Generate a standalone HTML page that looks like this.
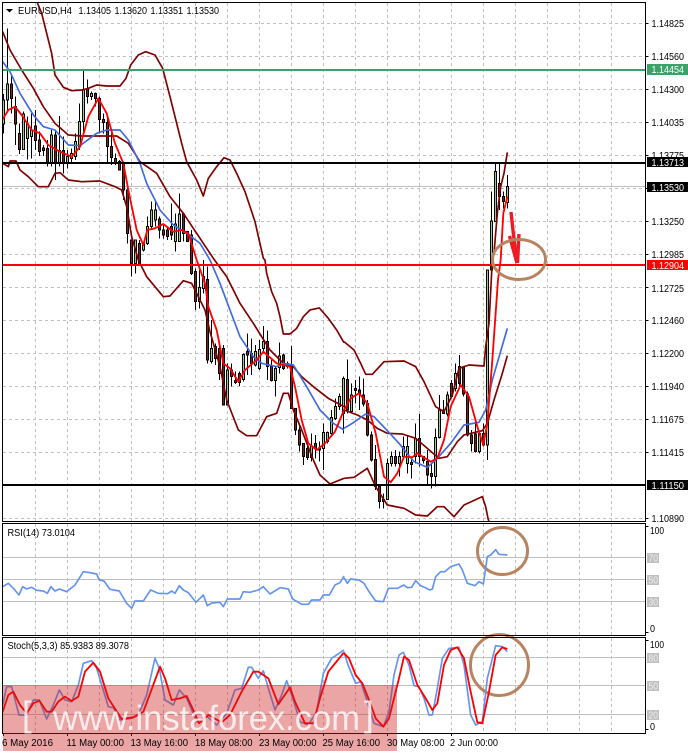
<!DOCTYPE html>
<html><head><meta charset="utf-8"><title>EURUSD H4</title>
<style>
html,body{margin:0;padding:0;background:#fff;width:688px;height:754px;overflow:hidden}
svg{display:block}
text{font-family:"Liberation Sans",sans-serif;font-size:10px;fill:#000}
.w{fill:#fff}
.g{fill:#eee}
.grid{stroke:#c0c0c0;stroke-width:1;stroke-dasharray:3 3;fill:none}
.sl{stroke:#c0c0c0;stroke-width:1;fill:none}
.wick{stroke:#000;stroke-width:3;fill:none}
.up{fill:#a5dc28;stroke:#000;stroke-width:3}
.dn{fill:#8b1a1a;stroke:#000;stroke-width:3}
.bb{stroke:#7f0000;stroke-width:5;fill:none;stroke-linejoin:round}
.ma{stroke:#4169e1;stroke-width:5;fill:none;stroke-linejoin:round}
.rd{stroke:#f00;stroke-width:5.5;fill:none;stroke-linejoin:round}
.cf{stroke:#6495ed;stroke-width:5;fill:none;stroke-linejoin:round}
</style></head><body>
<svg width="688" height="754" viewBox="0 0 688 754" xmlns="http://www.w3.org/2000/svg">
<rect width="688" height="754" fill="#fff"/>

<!-- grid -->
<g shape-rendering="crispEdges">
<path class="grid" d="M35.5 3V521M67.5 3V521M99.5 3V521M131.5 3V521M163.5 3V521M195.5 3V521M227.5 3V521M259.5 3V521M291.5 3V521M323.5 3V521M355.5 3V521M387.5 3V521M419.5 3V521M451.5 3V521M483.5 3V521M515.5 3V521M547.5 3V521M579.5 3V521M611.5 3V521"/>
<path class="grid" d="M3 23.5H645M3 56.5H645M3 89.5H645M3 122.5H645M3 155.5H645M3 188.5H645M3 221.5H645M3 254.5H645M3 287.5H645M3 320.5H645M3 353.5H645M3 386.5H645M3 419.5H645M3 452.5H645M3 518.5H645"/>
<path class="grid" d="M35.5 524V635M67.5 524V635M99.5 524V635M131.5 524V635M163.5 524V635M195.5 524V635M227.5 524V635M259.5 524V635M291.5 524V635M323.5 524V635M355.5 524V635M387.5 524V635M419.5 524V635M451.5 524V635M483.5 524V635M515.5 524V635M547.5 524V635M579.5 524V635M611.5 524V635"/>
<path class="grid" d="M35.5 638V733M67.5 638V733M99.5 638V733M131.5 638V733M163.5 638V733M195.5 638V733M227.5 638V733M259.5 638V733M291.5 638V733M323.5 638V733M355.5 638V733M387.5 638V733M419.5 638V733M451.5 638V733M483.5 638V733M515.5 638V733M547.5 638V733M579.5 638V733M611.5 638V733"/>
<path class="sl" d="M3 186.5H645M3 557.5H645M3 579.5H645M3 601.5H645M3 657.5H645M3 685.5H645M3 714.5H645"/>
</g>

<!-- candles -->
<g shape-rendering="crispEdges">
<g transform="scale(.33333)">
<path class="wick" d="M10.5 282V400M22.5 85V330M34.5 225V340M46.5 290V435M58.5 370V462M70.5 335V450M82.5 350V478M94.5 340V475M106.5 330V450M118.5 395V468M130.5 435V468M142.5 420V500M154.5 390V500M166.5 390V540M178.5 348V500M190.5 410V520M202.5 450V505M214.5 445V490M226.5 400V480M238.5 310V450M250.5 212V395M262.5 238V310M274.5 275V300M286.5 278V320M298.5 290V400M310.5 340V400M322.5 350V490M334.5 400V495M346.5 460V495M358.5 480V510M370.5 485V600M382.5 560V730M394.5 720V830M406.5 720V820M418.5 720V790M430.5 730V755M442.5 650V735M454.5 605V690M466.5 605V680M478.5 650V715M490.5 670V715M502.5 680V720M514.5 610V720M526.5 640V755M538.5 580V725M550.5 640V725M562.5 695V725M574.5 690V825"/>
<path class="up" d="M7.5 300h6V372h-6zM19.5 252h6V300h-6zM67.5 342h6V448h-6zM79.5 372h6V415h-6zM91.5 390h6V410h-6zM151.5 405h6V490h-6zM175.5 451h6V490h-6zM199.5 470h6V490h-6zM211.5 460h6V475h-6zM223.5 425h6V470h-6zM235.5 365h6V440h-6zM247.5 270h6V365h-6zM271.5 280h6V290h-6zM403.5 720h6V790h-6zM427.5 730h6V750h-6zM439.5 680h6V730h-6zM451.5 630h6V680h-6zM463.5 630h6V660h-6zM523.5 672h6V725h-6zM535.5 642h6V725h-6z"/>
<path class="dn" d="M31.5 252h6V295h-6zM43.5 320h6V372h-6zM55.5 400h6V448h-6zM103.5 378h6V422h-6zM115.5 420h6V455h-6zM127.5 444h6V452h-6zM139.5 445h6V490h-6zM163.5 405h6V490h-6zM187.5 452h6V490h-6zM259.5 266h6V290h-6zM283.5 280h6V295h-6zM295.5 295h6V358h-6zM307.5 358h6V368h-6zM319.5 368h6V440h-6zM331.5 440h6V472h-6zM343.5 475h6V488h-6zM355.5 485h6V510h-6zM367.5 490h6V570h-6zM379.5 570h6V700h-6zM391.5 720h6V790h-6zM415.5 730h6V790h-6zM475.5 657h6V690h-6zM487.5 690h6V705h-6zM499.5 690h6V710h-6zM511.5 680h6V705h-6zM547.5 642h6V700h-6zM559.5 695h6V725h-6zM571.5 705h6V820h-6z"/>
</g>
<g transform="translate(0 260) scale(.33333)">
<path class="wick" d="M586.5 25V150M598.5 30V145M610.5 0V100M622.5 20V310M634.5 180V310M646.5 250V315M658.5 255V360M670.5 255V435M682.5 310V435M694.5 310V380M706.5 335V372M718.5 335V378M730.5 280V365M742.5 220V345M754.5 235V345M766.5 255V320M778.5 240V330M790.5 198V280M802.5 212V360M814.5 300V365M826.5 320V410M838.5 248V340M850.5 280V330M862.5 305V325M874.5 258V445M886.5 445V525M898.5 500V575M910.5 550V615M922.5 555V600M934.5 520V605M946.5 525V595M958.5 545V605M970.5 490V630M982.5 515V550M994.5 450V530M1006.5 415V480M1018.5 400V450M1030.5 350V520"/>
<path class="up" d="M595.5 82h6V125h-6zM607.5 50h6V85h-6zM631.5 265h6V305h-6zM679.5 330h6V435h-6zM727.5 283h6V358h-6zM763.5 275h6V315h-6zM775.5 268h6V325h-6zM787.5 245h6V265h-6zM823.5 325h6V362h-6zM835.5 288h6V322h-6zM931.5 558h6V592h-6zM967.5 518h6V565h-6zM979.5 518h6V545h-6zM991.5 472h6V520h-6zM1003.5 440h6V475h-6zM1015.5 410h6V440h-6zM1027.5 355h6V460h-6z"/>
<path class="dn" d="M583.5 35h6V125h-6zM619.5 58h6V300h-6zM643.5 260h6V295h-6zM655.5 265h6V340h-6zM667.5 265h6V435h-6zM691.5 330h6V350h-6zM703.5 362h6V368h-6zM715.5 340h6V368h-6zM739.5 275h6V285h-6zM751.5 280h6V310h-6zM799.5 245h6V320h-6zM811.5 320h6V362h-6zM847.5 285h6V325h-6zM859.5 310h6V320h-6zM871.5 320h6V445h-6zM883.5 445h6V510h-6zM895.5 510h6V555h-6zM907.5 550h6V590h-6zM919.5 565h6V592h-6zM943.5 550h6V565h-6zM955.5 565h6V570h-6z"/>
</g>
<g transform="translate(344 260) scale(.33333)">
<path class="wick" d="M10.5 298V460M22.5 370V460M34.5 360V430M46.5 350V450M58.5 355V440M70.5 420V530M82.5 515V605M94.5 555V690M106.5 680V745M118.5 700V745M130.5 595V720M142.5 575V620M154.5 570V620M166.5 575V650M178.5 530V590M190.5 530V640M202.5 590V655M214.5 490V610M226.5 462V620M238.5 590V610M250.5 570V672M262.5 610V685M274.5 505V680M286.5 405V535M298.5 420V462M310.5 395V470M322.5 360V415M334.5 310V395M346.5 285V385M358.5 320V410M370.5 395V530M382.5 510V575M394.5 480V578M406.5 515V580M418.5 490V560M430.5 30V600"/>
<path class="up" d="M19.5 405h6V455h-6zM127.5 610h6V718h-6zM139.5 590h6V610h-6zM163.5 590h6V610h-6zM175.5 560h6V590h-6zM187.5 560h6V610h-6zM211.5 535h6V590h-6zM271.5 532h6V650h-6zM283.5 450h6V532h-6zM307.5 405h6V462h-6zM331.5 340h6V385h-6zM403.5 520h6V575h-6zM427.5 30h6V555h-6z"/>
<path class="dn" d="M7.5 358h6V450h-6zM31.5 385h6V392h-6zM43.5 390h6V400h-6zM55.5 405h6V432h-6zM67.5 430h6V525h-6zM79.5 525h6V600h-6zM91.5 598h6V680h-6zM103.5 680h6V725h-6zM115.5 718h6V725h-6zM151.5 590h6V610h-6zM199.5 608h6V614h-6zM223.5 535h6V590h-6zM235.5 590h6V602h-6zM247.5 605h6V645h-6zM259.5 640h6V650h-6zM295.5 450h6V460h-6zM319.5 370h6V410h-6zM343.5 320h6V370h-6zM355.5 322h6V402h-6zM367.5 402h6V525h-6zM379.5 525h6V550h-6zM391.5 522h6V575h-6zM415.5 520h6V555h-6z"/>
</g>
<g transform="translate(344 0) scale(.33333)">
<path class="wick" d="M442.5 575V810M454.5 490V665M466.5 490V630M478.5 575V625M490.5 525V625"/>
<path class="up" d="M439.5 663h6V810h-6zM451.5 514h6V665h-6zM487.5 560h6V607h-6z"/>
<path class="dn" d="M463.5 550h6V590h-6zM475.5 590h6V605h-6z"/>
</g>
</g>

<!-- indicator lines main -->
<g transform="scale(.33333)">
<path class="bb" d="M112 8L125 40L140 100L155 160L165 225L190 262L215 272L245 270L265 265L290 255L320 258L360 258L378 235L392 195L415 165L437 155L465 165L488 205L510 290L530 370L545 430L560 485L590 540L610 588L625 535L650 500L672 473L690 480L710 520L735 575L765 665L790 775L795 780L800 820L815 875L830 910L840 950L850 1002L870 1002L890 985L910 950L930 930L958 924L985 955L1010 990L1032 1028"/>
<path class="bb" d="M8 95L30 150L65 210L100 265L130 320L165 370L205 405L245 408L290 408L350 408L385 430L420 485L470 520L510 590L550 640L590 700L640 775L680 830L720 910L760 970L810 1050L850 1090L880 1100L905 1130L940 1160L985 1195L1032 1220"/>
<path class="bb" d="M8 490L25 500L30 483L48 483L60 510L85 530L115 560L145 560L165 520L180 518L205 540L245 545L300 543L345 560L365 570L380 620L395 710L415 780L440 830L465 860L490 890L510 888L550 842L575 850L590 880L615 930L630 995L660 1100L680 1200L715 1290L740 1307L770 1307L800 1250L830 1240L850 1180L865 1180L880 1230L905 1290L940 1380L960 1425L990 1452L1032 1435"/>
<path class="ma" d="M8 185L30 215L60 280L100 345L130 380L165 390L205 435L240 437L290 400L320 390L360 390L385 420L420 490L440 550L480 630L520 675L560 700L600 730L630 780L660 850L690 930L720 1010L760 1070L785 1090L830 1100L850 1090L880 1095L920 1160L960 1230L1000 1270L1032 1290"/>
<path class="rd" d="M8 358L25 330L45 320L65 345L95 390L120 400L145 435L180 455L215 470L240 440L265 350L295 295L320 340L345 430L370 490L385 570L410 690L430 735L442 690L465 685L490 672L520 695L545 690L565 700L590 780L615 850L625 920L650 990L670 1090L690 1105L715 1145L735 1110L770 1080L790 1055L830 1090L870 1100L885 1160L905 1260L925 1330L950 1350L975 1330L1005 1295L1032 1230"/>
</g>
<g transform="translate(344 260) scale(.33333)">
<path class="bb" d="M0 245L30 270L50 310L65 343L85 343L120 305L180 303L215 320L240 365L275 440L300 455L325 405L345 325L375 315L420 318L425 260L435 190L445 0L450 -20L460 -140L470 -220L480 -260L490 -323"/>
<path class="bb" d="M0 450L40 465L70 480L100 505L130 520L175 522L215 535L250 565L285 595L310 590L340 545L360 525L415 512L430 490L450 420L475 340L490 287"/>
<path class="bb" d="M0 655L30 652L70 625L95 680L130 735L180 745L215 765L250 768L280 740L300 740L330 770L360 735L415 710L425 740L433 780L436 782"/>
<path class="ma" d="M0 505L25 490L65 462L90 470L130 512L165 550L210 605L250 622L280 595L320 550L360 495L405 487L425 450L445 360L490 205"/>
<path class="rd" d="M0 450L20 415L45 400L70 430L95 520L120 650L140 667L160 640L180 590L205 592L220 580L260 605L280 595L300 540L320 440L350 375L375 410L400 500L418 555L430 490L445 300L462 60L470 0L478 -140L490 -190"/>
</g>

<!-- horizontal levels -->
<g shape-rendering="crispEdges">
<rect x="3" y="69" width="642" height="2" fill="#3ba26b"/>
<rect x="3" y="162" width="642" height="2" fill="#000"/>
<rect x="3" y="264" width="642" height="2" fill="#f00"/>
<rect x="3" y="484" width="642" height="2" fill="#000"/>
</g>

<!-- hand drawn arrow & circles -->
<path d="M511 212L513.5 235L517 263" stroke="#ed1c24" stroke-width="3.4" fill="none"/>
<path d="M509.5 236L517 263M519 234L517.5 263" stroke="#ed1c24" stroke-width="3.4" fill="none"/>
<g fill="none" stroke="#b8835f" stroke-width="3">
<ellipse cx="519" cy="259.5" rx="26.5" ry="20"/>
<ellipse cx="502.5" cy="551" rx="25" ry="23.5"/>
<ellipse cx="499.5" cy="665" rx="29" ry="30.5"/>
</g>

<!-- RSI / Stoch lines -->
<g transform="translate(0 515) scale(.33333)">
<path class="cf" d="M8 215L25 205L40 220L57 240L68 215L80 222L95 217L110 226L130 228L142 235L153 215L165 228L178 222L200 230L225 210L250 170L270 173L290 177L298 195L312 198L330 223L358 228L380 265L395 280L405 258L430 258L452 225L475 235L503 236L515 228L525 235L538 212L550 225L565 233L588 262L610 240L622 272L635 264L660 262L670 275L682 252L720 252L730 230L750 232L775 225L790 215L810 237L840 218L865 222L878 252L905 268L925 268L935 255L960 255L970 240L988 240L1005 210L1020 203L1032 183"/>
<path class="cf" d="M8 570L20 515L35 515L57 600L80 600L100 555L118 555L140 612L160 570L178 525L195 555L215 560L235 510L250 445L275 437L290 460L325 575L340 578L360 615L395 610L415 600L440 540L465 430L478 460L495 555L520 570L538 525L560 550L590 620L622 605L650 630L680 595L705 525L725 520L745 457L755 457L775 490L790 467L805 520L825 585L845 540L860 497L880 555L900 620L925 630L950 590L970 475L995 430L1032 405"/>
<path class="rd" d="M8 590L25 540L40 530L60 570L80 595L100 565L118 557L140 590L155 590L175 560L195 545L215 558L235 545L255 470L280 443L300 470L325 550L365 612L400 607L430 590L445 550L480 455L495 490L515 555L540 550L560 543L575 575L597 625L625 600L665 622L690 600L725 530L760 470L775 470L805 490L835 568L870 517L885 560L915 625L940 625L960 550L985 470L1032 412"/>
</g>
<g transform="translate(344 515) scale(.33333)">
<path class="cf" d="M0 188L10 205L20 192L45 195L60 205L75 230L95 258L118 260L133 220L160 220L180 210L190 218L203 217L215 197L230 212L258 225L265 222L275 185L290 170L303 170L320 155L345 147L355 165L370 205L393 212L405 200L418 207L430 125L440 120L455 104L465 118L490 120"/>
<path class="cf" d="M0 410L12 450L35 505L50 500L70 560L90 625L118 635L135 590L150 480L165 420L178 412L195 450L210 512L225 515L240 550L255 600L265 600L280 520L295 430L315 400L345 397L360 450L380 600L395 630L415 620L430 490L455 392L475 395L490 410"/>
<path class="rd" d="M0 415L15 430L35 480L55 505L75 555L95 610L118 635L135 610L165 490L180 425L195 435L220 510L245 550L265 585L280 565L300 450L320 405L340 397L360 430L380 530L400 622L415 625L435 530L455 420L475 397L490 402"/>
</g>

<!-- frames -->
<g shape-rendering="crispEdges" fill="none" stroke="#000" stroke-width="1">
<path d="M2.5 2.5H645.5V521.5H2.5Z"/>
<path d="M2.5 523.5H645.5V635.5H2.5Z"/>
<path d="M2.5 637.5H645.5V733.5H2.5Z"/>
<path d="M645.5 23.5h3M645.5 56.5h3M645.5 89.5h3M645.5 122.5h3M645.5 155.5h3M645.5 188.5h3M645.5 221.5h3M645.5 254.5h3M645.5 287.5h3M645.5 320.5h3M645.5 353.5h3M645.5 386.5h3M645.5 419.5h3M645.5 452.5h3M645.5 518.5h3"/>
<path d="M645.5 526.5h3M645.5 632.5h3M645.5 640.5h3M645.5 729.5h3"/>
<path d="M3.5 733v3M67.5 733v3M131.5 733v3M195.5 733v3M259.5 733v3M323.5 733v3M387.5 733v3M451.5 733v3"/>
</g>

<!-- header text -->
<path d="M6 9h7l-3.5 3.5z" fill="#000"/>
<text x="18" y="14" textLength="54" lengthAdjust="spacingAndGlyphs">EURUSD,H4</text>
<text x="78.5" y="14" textLength="32.5" lengthAdjust="spacingAndGlyphs">1.13405</text>
<text x="114.5" y="14" textLength="32.5" lengthAdjust="spacingAndGlyphs">1.13620</text>
<text x="150.5" y="14" textLength="32.5" lengthAdjust="spacingAndGlyphs">1.13351</text>
<text x="186.5" y="14" textLength="32.5" lengthAdjust="spacingAndGlyphs">1.13530</text>

<!-- price axis -->
<g>
<text x="651.5" y="27" textLength="32.5" lengthAdjust="spacingAndGlyphs">1.14825</text>
<text x="651.5" y="60" textLength="32.5" lengthAdjust="spacingAndGlyphs">1.14560</text>
<text x="651.5" y="93" textLength="32.5" lengthAdjust="spacingAndGlyphs">1.14300</text>
<text x="651.5" y="126" textLength="32.5" lengthAdjust="spacingAndGlyphs">1.14035</text>
<text x="651.5" y="159" textLength="32.5" lengthAdjust="spacingAndGlyphs">1.13775</text>
<text x="651.5" y="225" textLength="32.5" lengthAdjust="spacingAndGlyphs">1.13250</text>
<text x="651.5" y="258" textLength="32.5" lengthAdjust="spacingAndGlyphs">1.12985</text>
<text x="651.5" y="292" textLength="32.5" lengthAdjust="spacingAndGlyphs">1.12725</text>
<text x="651.5" y="324" textLength="32.5" lengthAdjust="spacingAndGlyphs">1.12460</text>
<text x="651.5" y="357" textLength="32.5" lengthAdjust="spacingAndGlyphs">1.12200</text>
<text x="651.5" y="390" textLength="32.5" lengthAdjust="spacingAndGlyphs">1.11940</text>
<text x="651.5" y="423" textLength="32.5" lengthAdjust="spacingAndGlyphs">1.11675</text>
<text x="651.5" y="456" textLength="32.5" lengthAdjust="spacingAndGlyphs">1.11415</text>
<text x="651.5" y="522" textLength="32.5" lengthAdjust="spacingAndGlyphs">1.10890</text>
<g shape-rendering="crispEdges">
<rect x="647" y="64" width="41" height="11" fill="#3ba26b"/>
<rect x="647" y="157" width="41" height="10" fill="#000"/>
<rect x="647" y="182" width="41" height="10" fill="#000"/>
<rect x="647" y="260" width="41" height="10" fill="#f00"/>
<rect x="647" y="480" width="41" height="10" fill="#000"/>
</g>
<text class="w" x="651.5" y="73" textLength="32.5" lengthAdjust="spacingAndGlyphs">1.14454</text>
<text class="w" x="651.5" y="166" textLength="32.5" lengthAdjust="spacingAndGlyphs">1.13713</text>
<text class="w" x="651.5" y="191" textLength="32.5" lengthAdjust="spacingAndGlyphs">1.13530</text>
<text class="w" x="651.5" y="269" textLength="32.5" lengthAdjust="spacingAndGlyphs">1.12904</text>
<text class="w" x="651.5" y="489" textLength="32.5" lengthAdjust="spacingAndGlyphs">1.11150</text>
</g>

<!-- indicator labels -->
<text x="7.5" y="536" textLength="67.5" lengthAdjust="spacingAndGlyphs">RSI(14) 73.0104</text>
<text x="7.5" y="649" textLength="121.5" lengthAdjust="spacingAndGlyphs">Stoch(5,3,3) 85.9383 89.3078</text>
<text x="650" y="534" textLength="14" lengthAdjust="spacingAndGlyphs">100</text>
<text x="650" y="632" textLength="5" lengthAdjust="spacingAndGlyphs">0</text>
<text x="650" y="648" textLength="14" lengthAdjust="spacingAndGlyphs">100</text>
<text x="650" y="730" textLength="5" lengthAdjust="spacingAndGlyphs">0</text>
<g shape-rendering="crispEdges" fill="#c0c0c0">
<rect x="647" y="553" width="12" height="10"/>
<rect x="647" y="575" width="12" height="10"/>
<rect x="647" y="597" width="12" height="10"/>
<rect x="647" y="653" width="12" height="10"/>
<rect x="647" y="681" width="12" height="10"/>
<rect x="647" y="710" width="12" height="10"/>
</g>
<text class="g" x="648.5" y="561.5" textLength="9.5" lengthAdjust="spacingAndGlyphs">70</text>
<text class="g" x="648.5" y="583.5" textLength="9.5" lengthAdjust="spacingAndGlyphs">50</text>
<text class="g" x="648.5" y="605.5" textLength="9.5" lengthAdjust="spacingAndGlyphs">30</text>
<text class="g" x="648.5" y="661.5" textLength="9.5" lengthAdjust="spacingAndGlyphs">80</text>
<text class="g" x="648.5" y="689.5" textLength="9.5" lengthAdjust="spacingAndGlyphs">50</text>
<text class="g" x="648.5" y="718.5" textLength="9.5" lengthAdjust="spacingAndGlyphs">20</text>

<!-- watermark -->
<rect x="3" y="685" width="394" height="66" fill="#cf1f1f" fill-opacity=".4"/>
<text x="22" y="726" style="font-size:35px;fill:#fff;fill-opacity:.8">[</text>
<text x="53" y="730" textLength="307" lengthAdjust="spacingAndGlyphs" style="font-size:35px;fill:#fff;fill-opacity:.8">www.instaforex.com</text>
<text x="364" y="726" style="font-size:35px;fill:#fff;fill-opacity:.8">]</text>

<!-- time axis -->
<text x="2" y="746" textLength="51" lengthAdjust="spacingAndGlyphs">6 May 2016</text>
<text x="66.5" y="746" textLength="57.5" lengthAdjust="spacingAndGlyphs">11 May 00:00</text>
<text x="130.5" y="746" textLength="57.5" lengthAdjust="spacingAndGlyphs">13 May 16:00</text>
<text x="195" y="746" textLength="57.5" lengthAdjust="spacingAndGlyphs">18 May 08:00</text>
<text x="259" y="746" textLength="57.5" lengthAdjust="spacingAndGlyphs">23 May 00:00</text>
<text x="322.5" y="746" textLength="57.5" lengthAdjust="spacingAndGlyphs">25 May 16:00</text>
<text x="387" y="746" textLength="57.5" lengthAdjust="spacingAndGlyphs">30 May 08:00</text>
<text x="450" y="746" textLength="48" lengthAdjust="spacingAndGlyphs">2 Jun 00:00</text>
</svg>
</body></html>
